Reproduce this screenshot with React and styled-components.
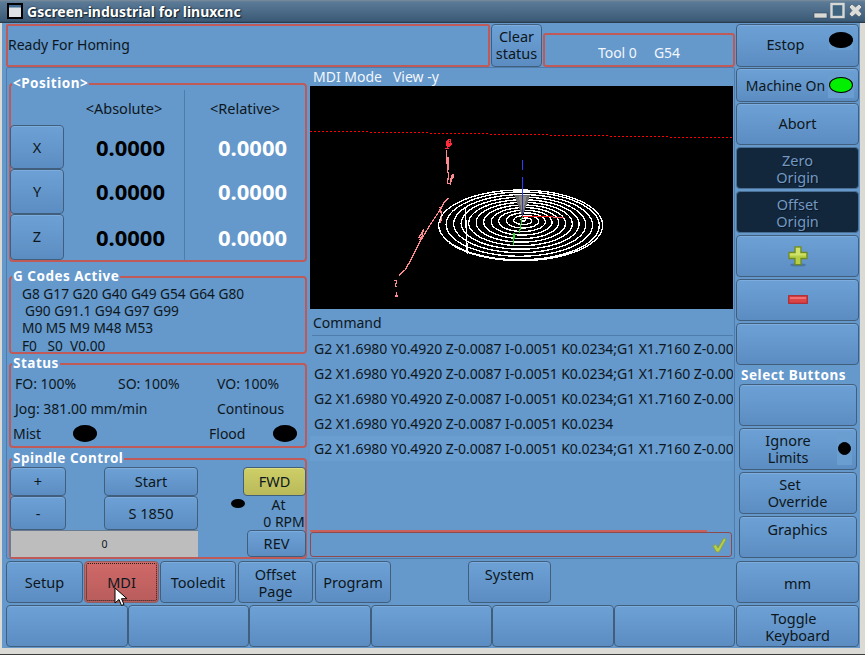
import React from "react";
import styled, { createGlobalStyle } from "styled-components";

const Global = createGlobalStyle`
  html, body { margin: 0; padding: 0; background: #dcdad5; }
  * { box-sizing: border-box; }
  body { font-family: "Noto Sans", "Open Sans", sans-serif; font-size: 14px; color: #0d1720; }
`;

const Window = styled.div`
  position: relative;
  width: 865px;
  height: 655px;
  display: flex;
  flex-direction: column;
  background: #dcdad5;
  border-bottom: 1px solid #3c3c3c;
  overflow: hidden;
`;

const TitleBar = styled.div`
  height: 23px;
  flex: none;
  display: flex;
  align-items: center;
  padding: 0 3px 1px 7px;
  gap: 4px;
  background: linear-gradient(#7d8d9b 0, #5a7a96 2px, #4d6d8a 10px, #3b5a76 21px, #25333f 23px);
`;

const TitleText = styled.div`
  flex: 1;
  color: #fff;
  font-weight: 700;
  font-size: 14px;
  text-shadow: 1px 1px 1px #10202e, 0 0 2px #1a2b3b;
`;

const Client = styled.div`
  margin: 0 5px 0 2px;
  height: 625px;
  flex: none;
  background: #6598cb;
  padding: 1px 1px 0 4px;
  display: grid;
  grid-template-columns: 730px 123px;
`;

const MainCol = styled.div`
  display: flex;
  flex-direction: column;
  min-width: 0;
`;

const TopRow = styled.div`
  display: flex;
  height: 43px;
  flex: none;
`;

const MessageBox = styled.div`
  width: 484px;
  border: 2px solid #c05a58;
  border-radius: 2px;
  padding: 0 0 2px 0;
  display: flex;
  align-items: center;
  font-size: 14px;
`;

const Button = styled.button`
  font-family: inherit;
  font-size: ${p => p.$fs || 14.5}px;
  line-height: 17px;
  color: #0d1720;
  margin: 0 0 0 ${p => p.$ml || 0}px;
  padding: ${p => (p.$top ? 4 : 0) + Math.max(p.$dy || 0, 0)}px 0 ${p => Math.max(-(p.$dy || 0), 0)}px 0;
  border: 1px solid #415f7d;
  border-radius: 4px;
  background: linear-gradient(#6da1d5, #5c8dc2);
  box-shadow: inset 0 1px 0 #7cadde;
  display: flex;
  align-items: ${p => (p.$top ? "flex-start" : "center")};
  justify-content: center;
  text-align: center;
  white-space: pre;
  width: ${p => (p.$w ? p.$w + "px" : "auto")};
  height: ${p => (p.$h ? p.$h + "px" : "auto")};
  flex: ${p => (p.$grow ? "1" : "none")};
  position: relative;
`;

const ClearButton = styled(Button)`
  margin-left: 1px;
  height: 43px;
  width: 51px;
`;

const ToolBox = styled.div`
  margin: 9px 0 0 1px;
  width: 192px;
  height: 34px;
  border: 2px solid #c05a58;
  border-radius: 3px;
  color: #f2f7fb;
  display: flex;
  align-items: center;
  justify-content: center;
  gap: 17px;
  padding: 5px 0 0 0;
  font-size: 14px;
`;

const WorkArea = styled.div`
  flex: none;
  height: 492px;
  margin-right: 1px;
  border: 1px solid #4f7dab;
  border-radius: 2px;
  display: grid;
  grid-template-columns: 301px 1fr;
  padding: 0 0 0 2px;
`;

const LeftCol = styled.div`
  display: flex;
  flex-direction: column;
  width: 298px;
`;

const Group = styled.fieldset`
  margin: ${p => p.$mt}px 0 0 0;
  padding: 0;
  height: ${p => p.$h}px;
  min-width: 0;
  border: 2px solid #c05a58;
  border-radius: 4px;
  flex: none;
`;

const GroupTitle = styled.legend`
  color: #fff;
  font-weight: 700;
  font-size: 13.5px;
  height: 16px;
  line-height: 14px;
  margin-left: 1px;
  padding: 0 1px;
  letter-spacing: 0.5px;
`;

const PositionGrid = styled.div`
  display: grid;
  grid-template-columns: 54px 121px 1fr;
  grid-template-rows: 40px 44px 44.5px 46.5px;
  margin: -7px 0 0 -1px;
`;

const HeadCell = styled.div`
  display: flex;
  justify-content: center;
  align-items: flex-end;
  padding: 0 0 7px 0;
  font-size: 14.5px;
  height: 35px;
  align-self: start;
  margin-top: 5px;
  border-right: ${p => (p.$div ? "1px solid #4f7dab" : "none")};
`;

const AxisButton = styled(Button)`
  width: 54px;
  font-size: 14.5px;
`;

const Value = styled.div`
  display: flex;
  justify-content: ${p => (p.$abs ? "flex-end" : "flex-start")};
  align-items: center;
  font-weight: 700;
  font-size: 22px;
  color: ${p => (p.$abs ? "#000" : "#fff")};
  padding: ${p => (p.$abs ? "0 19px 0 0" : "0 0 0 33px")};
  border-right: ${p => (p.$abs ? "1px solid #4f7dab" : "none")};
`;

const CodeList = styled.div`
  padding: 0 0 0 11px;
  font-size: 13.7px;
  line-height: 17.2px;
  white-space: pre;
`;

const CodeLine = styled.div`
  padding-left: ${p => p.$indent || 0}px;
`;

const StatusGrid = styled.div`
  display: grid;
  grid-template-columns: 103px 99px 1fr;
  grid-template-rows: 25px 25px 25px;
  margin-top: -1px;
  padding: 0 0 0 4px;
  font-size: 14px;
  align-items: center;
`;

const JogCell = styled.div`
  grid-column: 1 / 3;
`;

const LampRow = styled.div`
  grid-column: 1 / 4;
  display: flex;
  align-items: center;
  padding-right: 8px;
  margin-left: -2px;
`;

const LampLabel = styled.span`
  width: ${p => p.$w}px;
`;

const Lamp = styled.span`
  display: inline-block;
  flex: none;
  width: ${p => p.$w || 24}px;
  height: ${p => p.$h || 17}px;
  border-radius: 50%;
  background: ${p => p.$color || "#000"};
  border: 1px solid #000;
`;

const Spacer = styled.div`
  flex: 1;
`;

const SpindleBody = styled.div`
  display: grid;
  grid-template-columns: 188px 1fr;
  margin: 0 -1px 0 -1px;
  height: 90px;
`;

const SpindleLeft = styled.div`
  display: grid;
  grid-template-columns: 56px 38px 94px;
  grid-template-rows: 29px 34px 27px;
`;

const BarCell = styled.div`
  grid-column: 1 / 4;
  background: #bdbdbd;
  border: 1px solid #6a7d90;
  border-width: 1px 0 0 1px;
  display: flex;
  align-items: center;
  justify-content: center;
  font-size: 10.5px;
`;

const SpindleRight = styled.div`
  position: relative;
  display: flex;
  flex-direction: column;
  align-items: flex-end;
`;

const FwdButton = styled(Button)`
  width: 63px;
  height: 29px;
  background: linear-gradient(#cfcf68, #b9b95a);
  box-shadow: inset 0 1px 0 #dede7c;
  flex: none;
`;

const RpmLabel = styled.div`
  width: 44px;
  height: 34px;
  line-height: 17px;
  text-align: center;
  white-space: pre;
  flex: none;
  font-size: 14px;
  display: flex;
  flex-direction: column;
  align-items: center;
`;

const AtDot = styled.span`
  position: absolute;
  left: 33px;
  top: 32px;
  width: 14px;
  height: 9px;
  border-radius: 50%;
  background: #000;
`;

const RevButton = styled(Button)`
  width: 59px;
  height: 27px;
  flex: none;
`;

const CenterCol = styled.div`
  display: flex;
  flex-direction: column;
  min-width: 0;
  width: 423px;
`;

const ModeLabel = styled.div`
  height: 18px;
  color: #f2f7fb;
  font-size: 14px;
  line-height: 17px;
  padding-left: 3px;
  white-space: pre;
  flex: none;
`;

const Canvas = styled.svg`
  display: block;
  width: 423px;
  height: 223px;
  background: #000;
  flex: none;
`;

const CommandLabel = styled.div`
  margin: 5px 0 0 2px;
  height: 22px;
  line-height: 18px;
  padding-left: 1px;
  font-size: 14px;
  border-bottom: 1px solid #4f7dab;
  flex: none;
`;

const CommandList = styled.div`
  height: 194px;
  flex: none;
  overflow: hidden;
`;

const CommandRow = styled.div`
  height: 25px;
  line-height: 25px;
  padding-left: 4px;
  font-size: 14px;
  letter-spacing: -0.06px;
  white-space: pre;
  background: ${p => (p.$hl ? "#6a9dd0" : "transparent")};
`;

const ProgressLine = styled.div`
  width: 397px;
  height: 2px;
  background: #c8605c;
  flex: none;
`;

const Entry = styled.div`
  height: 25px;
  width: 422px;
  border: 1px solid #8f4a4e;
  border-radius: 3px;
  display: flex;
  align-items: center;
  justify-content: flex-end;
  padding-right: 4px;
  flex: none;
`;

const BottomRow = styled.div`
  display: flex;
  height: 42px;
  margin: 2px ${p => p.$mr || 0}px 0 0;
  flex: none;
`;

const MdiButton = styled(Button)`
  background: linear-gradient(#d06a68, #b85c5c);
  box-shadow: none;
  border-color: #8e5f60;
  &::after {
    content: "";
    position: absolute;
    inset: 1px;
    border: 1px dotted #222;
    border-radius: 2px;
  }
`;

const SideCol = styled.div`
  display: flex;
  flex-direction: column;
  align-items: center;
`;

const SideButton = styled(Button)`
  width: 123px;
  height: ${p => p.$h || 42}px;
  margin: ${p => p.$mt ?? 2}px 0 0 0;
  padding-right: ${p => p.$pr || 0}px;
  font-size: ${p => p.$fs || 14.5}px;
  flex: none;
`;

const SelectButton = styled(Button)`
  width: 118px;
  height: 42px;
  margin: ${p => p.$mt ?? 2}px 0 0 0;
  flex: none;
`;

const DarkButton = styled(Button)`
  width: 123px;
  height: 42px;
  margin-top: 2px;
  padding-top: 2px;
  flex: none;
  color: #7299c2;
  background: #12263c;
  box-shadow: none;
  border-color: #4a6f94;
  text-shadow: 1px 1px 0 #0b1826;
`;

const SideHeading = styled.div`
  height: 17px;
  margin-top: 2px;
  width: 100%;
  padding-left: 5px;
  color: #fff;
  font-weight: 700;
  font-size: 13.5px;
  line-height: 17px;
  letter-spacing: 0.55px;
  white-space: pre;
  flex: none;
`;

const LampSlot = styled.span`
  position: absolute;
  right: ${p => p.$r}px;
  top: ${p => p.$t}px;
  display: flex;
  background: #6a9dd0;
  padding: ${p => p.$pad || "0"};
`;

const Cursor = styled.svg`
  position: absolute;
  left: 29px;
  top: 25px;
  z-index: 2;
`;

const axis = ["X", "Y", "Z"];
const cmdLong = "G2 X1.6980 Y0.4920 Z-0.0087 I-0.0051 K0.0234;G1 X1.7160 Z-0.00";
const cmdShort = "G2 X1.6980 Y0.4920 Z-0.0087 I-0.0051 K0.0234";

function spiralPath() {
  const turns = 11.5;
  const steps = 900;
  const pts = [];
  for (let i = 0; i <= steps; i++) {
    const t = i / steps;
    const f = Math.min(1, t * 1.08);
    const a = t * 1.08 * turns * Math.PI * 2;
    const cx = 645 - 13 * f;
    const cy = 450 + 16 * f;
    pts.push(`${(cx + 246 * f * Math.cos(a)).toFixed(1)},${(cy + 106 * f * Math.sin(a)).toFixed(1)}`);
  }
  return "M" + pts.join("L");
}

const dotRows = [...Array(106).keys()].map(i => {
  const x = i * 12;
  const step = Math.min(6, Math.floor(x / 180));
  return { x, y: 183 + step * 3 };
});

const ToolView = () => (
  <Canvas viewBox="0 48 1269 669" shapeRendering="crispEdges">
    {dotRows.map(d => (
      <rect key={d.x} x={d.x} y={d.y} width="6" height="3" fill="#f00" />
    ))}
    <g fill="none" strokeWidth="4">
      <path d="M420 207L424 224L412 232L410 214L420 207M416 212L414 230M404 235H416M408 222L422 212M410 228L424 218" stroke="#ff2a3a" />
      <path d="M410 240L410 280L416 284L412 300L416 315L412 340L422 342L424 318L430 314L428 328M414 262V300" stroke="#ff8a90" />
      <path d="M268 616L285 600L300 575L330 515L360 465L390 420L402 398L415 385" stroke="#ff8a90" />
      <path d="M325 505L335 490L340 478L336 500L328 510" stroke="#ff8a90" />
      <path d="M390 410L394 432L392 460" stroke="#ff8a90" />
      <path d="M253 632H260L256 650H260M258 668L262 678H256" stroke="#ff8a90" />
      <path d="M466 410L468 462L472 552" stroke="#fff" />
      <path d={spiralPath()} stroke="#fff" />
    </g>
    <polygon points="613,376 661,376 637,440" fill="#6c6c6c" />
    <polygon points="626,378 650,378 637,432" fill="#8c8c8c" />
    <path d="M637 270V300M637 322V378" stroke="#2a40ff" strokeWidth="3" />
    <path d="M637 378V438" stroke="#3a3a90" strokeWidth="3" />
    <path d="M637 439H730" stroke="#f02020" strokeWidth="3" />
    <path d="M730 441H762" stroke="#f06060" strokeWidth="3" />
    <path d="M637 440L628 490" stroke="#20e020" strokeWidth="3" />
    <path d="M612 490L610 525" stroke="#20e020" strokeWidth="5" />
  </Canvas>
);

const PlusIcon = () => (
  <svg width="20" height="21" viewBox="0 0 20 21">
    <ellipse cx="10" cy="19" rx="8" ry="1.6" fill="#4a76a3" />
    <path d="M7 .8h6v5.7h6v6h-6v6.2H7v-6.2H1v-6h6z" fill="#b7cf45" stroke="#6f8a22" strokeWidth="1.3" />
    <path d="M8 2h4v5.5h6v2H1.8v-2H8z" fill="#cfe26a" />
  </svg>
);

const MinusIcon = () => (
  <svg width="20" height="10" viewBox="0 0 20 10">
    <rect x=".7" y=".7" width="18.6" height="7.6" fill="#dc4545" stroke="#b22a30" strokeWidth="1.2" />
    <rect x="2" y="2" width="16" height="2" fill="#ee7070" />
  </svg>
);

const CheckIcon = () => (
  <svg width="15" height="16" viewBox="0 0 15 16">
    <path d="M1 9L4 7.5L6 11L12 1L14 2.5L7 15H4.5Z" fill="#b6cf4a" stroke="#8ba033" strokeWidth=".8" />
  </svg>
);

const WinIcon = () => (
  <svg width="16" height="16" viewBox="0 0 16 16">
    <rect x="1" y="1" width="14" height="14" fill="#dfe3e6" stroke="#000" strokeWidth="2" />
    <rect x="2" y="2" width="12" height="2.5" fill="#3f6a92" />
  </svg>
);

const WinButtons = () => (
  <svg width="49" height="20" viewBox="0 0 49 20">
    <rect x="1" y="12" width="13" height="5" fill="#d8d8d4" stroke="#33485c" strokeWidth=".6" />
    <rect x="18.5" y="3" width="12" height="13" fill="#3e6480" stroke="#d8d8d4" strokeWidth="2.4" />
    <path d="M36 6l3-3 3.5 3 3.5-3 3 3-3 3.5 3 3.5-3 3-3.5-3-3.5 3-3-3 3-3.5z" fill="#dcdcd8" stroke="#33485c" strokeWidth=".6" />
  </svg>
);

export default function App() {
  return (
    <Window>
      <Global />
      <TitleBar>
        <WinIcon />
        <TitleText>Gscreen-industrial for linuxcnc</TitleText>
        <WinButtons />
      </TitleBar>
      <Client>
        <MainCol>
          <TopRow>
            <MessageBox>Ready For Homing</MessageBox>
            <ClearButton $dy={-2}>{"Clear\nstatus"}</ClearButton>
            <ToolBox>
              <span>Tool 0</span>
              <span>G54</span>
            </ToolBox>
          </TopRow>
          <WorkArea>
            <LeftCol>
              <Group $mt={8} $h={186}>
                <GroupTitle>&lt;Position&gt;</GroupTitle>
                <PositionGrid>
                  <HeadCell />
                  <HeadCell $div>&lt;Absolute&gt;</HeadCell>
                  <HeadCell>&lt;Relative&gt;</HeadCell>
                  {axis.map(a => (
                    <React.Fragment key={a}>
                      <AxisButton>{a}</AxisButton>
                      <Value $abs>0.0000</Value>
                      <Value>0.0000</Value>
                    </React.Fragment>
                  ))}
                </PositionGrid>
              </Group>
              <Group $mt={7} $h={85}>
                <GroupTitle>G Codes Active</GroupTitle>
                <CodeList>
                  <CodeLine>G8 G17 G20 G40 G49 G54 G64 G80</CodeLine>
                  <CodeLine $indent={3}>G90 G91.1 G94 G97 G99</CodeLine>
                  <CodeLine>M0 M5 M9 M48 M53</CodeLine>
                  <CodeLine>{"F0   S0  V0.00"}</CodeLine>
                </CodeList>
              </Group>
              <Group $mt={2} $h={92}>
                <GroupTitle>Status</GroupTitle>
                <StatusGrid>
                  <span>FO: 100%</span>
                  <span>SO: 100%</span>
                  <span>VO: 100%</span>
                  <JogCell>Jog: 381.00 mm/min</JogCell>
                  <span>Continous</span>
                  <LampRow>
                    <LampLabel $w={60}>Mist</LampLabel>
                    <Lamp />
                    <Spacer />
                    <LampLabel $w={64}>Flood</LampLabel>
                    <Lamp />
                  </LampRow>
                </StatusGrid>
              </Group>
              <Group $mt={3} $h={108}>
                <GroupTitle>Spindle Control</GroupTitle>
                <SpindleBody>
                  <SpindleLeft>
                    <Button>+</Button>
                    <span />
                    <Button>Start</Button>
                    <Button>-</Button>
                    <span />
                    <Button>S 1850</Button>
                    <BarCell>0</BarCell>
                  </SpindleLeft>
                  <SpindleRight>
                    <FwdButton>FWD</FwdButton>
                    <AtDot />
                    <RpmLabel>
                      <span>{"At   "}</span>
                      <span>0 RPM</span>
                    </RpmLabel>
                    <RevButton>REV</RevButton>
                  </SpindleRight>
                </SpindleBody>
              </Group>
            </LeftCol>
            <CenterCol>
              <ModeLabel>{"MDI Mode   View -y"}</ModeLabel>
              <ToolView />
              <CommandLabel>Command</CommandLabel>
              <CommandList>
                <CommandRow>{cmdLong}</CommandRow>
                <CommandRow>{cmdLong}</CommandRow>
                <CommandRow>{cmdLong}</CommandRow>
                <CommandRow>{cmdShort}</CommandRow>
                <CommandRow $hl>{cmdLong}</CommandRow>
              </CommandList>
              <ProgressLine />
              <Entry>
                <CheckIcon />
              </Entry>
            </CenterCol>
          </WorkArea>
          <BottomRow>
            <Button $w={77}>Setup</Button>
            <MdiButton $w={75} $ml={1}>
              MDI
              <Cursor width="14" height="20" viewBox="0 0 14 20">
                <path d="M1 1v15l4-3.5 2.5 6 2.5-1-2.5-5.8H13z" fill="#fff" stroke="#000" strokeWidth="1" />
              </Cursor>
            </MdiButton>
            <Button $w={76} $ml={1}>Tooledit</Button>
            <Button $w={75} $ml={2} $dy={2}>{"Offset\nPage"}</Button>
            <Button $w={76} $ml={2}>Program</Button>
            <Button $w={83} $ml={77} $top>System</Button>
          </BottomRow>
          <BottomRow $mr={1}>
            <Button $grow />
            <Button $grow />
            <Button $grow />
            <Button $grow />
            <Button $grow />
            <Button $grow />
          </BottomRow>
        </MainCol>
        <SideCol>
          <SideButton $h={43} $mt={0} $pr={24} $dy={-2}>
            Estop
            <LampSlot $r={5} $t={5} $pad="2px 0">
              <Lamp $w={24} $h={16} />
            </LampSlot>
          </SideButton>
          <SideButton $h={34} $mt={1} $pr={24} $fs={14}>
            Machine On
            <LampSlot $r={4} $t={3} $pad="5px 1px">
              <Lamp $w={24} $h={16} $color="#00f000" />
            </LampSlot>
          </SideButton>
          <SideButton $mt={1} $dy={-2}>Abort</SideButton>
          <DarkButton>{"Zero\nOrigin"}</DarkButton>
          <DarkButton>{"Offset\nOrigin"}</DarkButton>
          <SideButton><PlusIcon /></SideButton>
          <SideButton><MinusIcon /></SideButton>
          <SideButton />
          <SideHeading>Select Buttons</SideHeading>
          <SelectButton $mt={0} />
          <SelectButton>
            {"Ignore     \nLimits     "}
            <LampSlot $r={4} $t={3} $pad="10px 1px">
              <Lamp $w={13} $h={13} />
            </LampSlot>
          </SelectButton>
          <SelectButton>{"Set    \nOverride"}</SelectButton>
          <SelectButton $top $dy={-1}>Graphics</SelectButton>
          <SideButton $mt={3} $dy={2}>mm</SideButton>
          <SideButton $dy={2}>{"Toggle  \nKeyboard"}</SideButton>
        </SideCol>
      </Client>
    </Window>
  );
}
